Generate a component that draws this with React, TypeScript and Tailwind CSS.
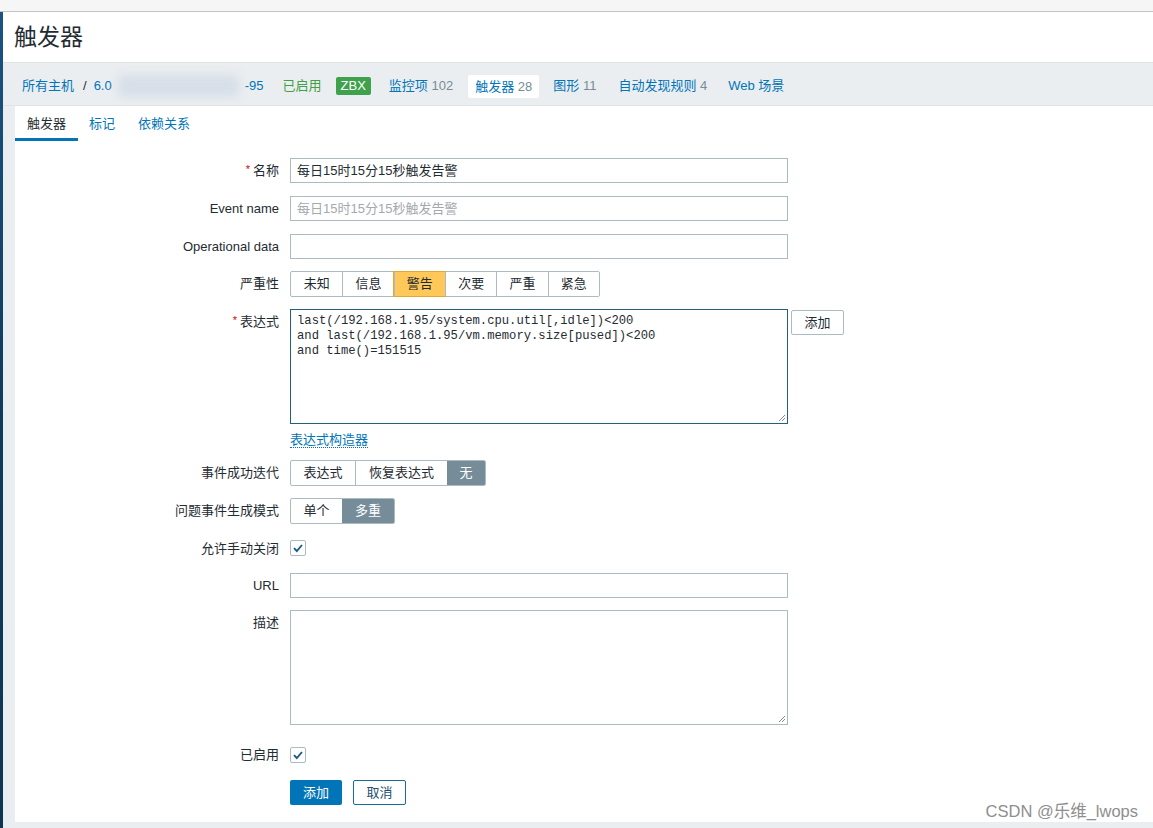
import React from "react";

const Check = () => (
  <div className="w-[16px] h-[16px] border border-[#acbbc2] rounded-[2px] bg-white flex items-center justify-center">
    <svg width="12" height="12" viewBox="0 0 12 12">
      <path d="M2 6.2 L4.8 9 L10 3" fill="none" stroke="#1d5a85" strokeWidth="1.9" />
    </svg>
  </div>
);

const Grip = () => (
  <svg width="8" height="8" viewBox="0 0 8 8" className="absolute right-[1px] bottom-[1px]">
    <path d="M7 1 L1 7 M7 4 L4 7" stroke="#8a8a8a" strokeWidth="1" />
  </svg>
);

function Row({ label, req, children, className = "" }: { label: string; req?: boolean; children: React.ReactNode; className?: string }) {
  return (
    <div className={"flex " + className}>
      <div className="w-[264px] text-right text-[13px] leading-[25px] text-[#1f2c33] shrink-0">
        {req && <span className="text-[#d40000] text-[11px] mr-[3px] relative top-[-2px]">*</span>}
        {label}
      </div>
      <div className="ml-[11px]">{children}</div>
    </div>
  );
}

const Input = ({ value, placeholder }: { value?: string; placeholder?: boolean }) => (
  <div
    className={
      "w-[498px] h-[25px] border border-[#acbbc2] bg-white px-[6px] text-[13px] leading-[23px] " +
      (placeholder ? "text-[#a3a9ad]" : "text-[#1f2c33]")
    }
  >
    {value}
  </div>
);

export default function App() {
  const sev = ["未知", "信息", "警告", "次要", "严重", "紧急"];
  return (
    <div className="w-[1153px] h-[828px] overflow-hidden bg-[#ebeef0] relative font-['Liberation_Sans','Noto_Sans_CJK_SC',sans-serif]">
      {/* top strip */}
      <div className="h-[12px] bg-[#f6f6f6] border-b border-[#c3c3c3]" />
      <div className="flex h-[816px]">
        <div className="w-[3px] bg-gradient-to-b from-[#1b5384] via-[#103a5c] to-[#0f3553] shrink-0" />
        <div className="flex-1 flex flex-col min-w-0">
          {/* header */}
          <div className="h-[51px] bg-white flex items-center pl-[11px] border-b border-[#dfe4e7]">
            <span className="text-[23px] text-[#1f2c33] leading-none">触发器</span>
          </div>
          {/* breadcrumb */}
          <div className="h-[43px] bg-[#ebeef0] border-b border-[#dfe4e7] flex items-center text-[13px] pl-[19px] pt-[4px]">
            <span className="text-[#0275b8]">所有主机</span>
            <span className="text-[#1f2c33] ml-[9px]">/</span>
            <span className="text-[#0275b8] ml-[7px]">6.0</span>
            <span className="inline-block w-[121px] h-[22px] mx-[6px] bg-[#d6dfe8] blur-[5px] rounded" />
            <span className="text-[#0275b8]">-95</span>
            <span className="text-[#429e47] ml-[19px]">已启用</span>
            <span className="ml-[14px] bg-[#3fa14b] text-white px-[5px] h-[18px] leading-[18px] rounded-[2px] text-[13px]">ZBX</span>
            <span className="ml-[11px] px-[7px] text-[#0275b8]">
              监控项 <span className="text-[#768d99]">102</span>
            </span>
            <span className="ml-[8px] px-[7px] h-[23px] leading-[23px] bg-white rounded-[2px] text-[#0275b8]">
              触发器 <span className="text-[#768d99]">28</span>
            </span>
            <span className="ml-[7px] px-[7px] text-[#0275b8]">
              图形 <span className="text-[#768d99]">11</span>
            </span>
            <span className="ml-[8px] px-[7px] text-[#0275b8]">
              自动发现规则 <span className="text-[#768d99]">4</span>
            </span>
            <span className="ml-[7px] px-[7px] text-[#0275b8]">Web 场景</span>
          </div>
          {/* content */}
          <div className="flex-1 pl-[12px] flex flex-col">
            <div className="flex-1 bg-white">
              {/* tabs */}
              <div className="h-[35px] flex text-[13px]">
                <div className="px-[12px] flex items-center text-[#1f2c33] border-b-[3px] border-[#0275b8] pt-[3px]">触发器</div>
                <div className="px-[11px] flex items-center text-[#0275b8] pt-[3px] border-b-[3px] border-transparent">标记</div>
                <div className="px-[12px] flex items-center text-[#0275b8] pt-[3px] border-b-[3px] border-transparent">依赖关系</div>
              </div>
              {/* form */}
              <div className="pt-[17px] flex flex-col gap-[12px]">
                <Row label="名称" req>
                  <Input value="每日15时15分15秒触发告警" />
                </Row>
                <Row label="Event name">
                  <Input value="每日15时15分15秒触发告警" placeholder />
                </Row>
                <Row label="Operational data" className="mt-[1px]">
                  <Input />
                </Row>
                <Row label="严重性">
                  <div className="w-[310px] h-[26px] grid grid-cols-6 border border-[#acbbc2] rounded-[2px] text-[13px] text-[#1f2c33]">
                    {sev.map((s, i) => (
                      <div
                        key={s}
                        className={
                          "flex items-center justify-center " +
                          (i > 0 ? "border-l border-[#acbbc2] " : "") +
                          (i === 2 ? "bg-[#ffc859] outline outline-1 outline-[#e0a83a]" : "")
                        }
                      >
                        {s}
                      </div>
                    ))}
                  </div>
                </Row>
                <Row label="表达式" req>
                  <div className="flex items-start">
                    <div className="relative w-[498px] h-[115px] border border-[#245f7c] bg-white px-[6px] py-[4px] font-['Liberation_Mono',monospace] text-[12.2px] leading-[15px] text-[#1f2c33] whitespace-pre">
                      {"last(/192.168.1.95/system.cpu.util[,idle])<200\nand last(/192.168.1.95/vm.memory.size[pused])<200\nand time()=151515"}
                      <Grip />
                    </div>
                    <div className="ml-[3px] mt-[1px] w-[53px] h-[25px] border border-[#acbbc2] rounded-[2px] text-[13px] text-[#1f2c33] flex items-center justify-center">
                      添加
                    </div>
                  </div>
                  <div className="mt-[7px] leading-[17px] text-[13px]">
                    <span className="text-[#0275b8] border-b border-dotted border-[#0275b8]">表达式构造器</span>
                  </div>
                </Row>
                <Row label="事件成功迭代">
                  <div className="flex h-[26px] border border-[#acbbc2] rounded-[2px] text-[13px] text-[#1f2c33] w-fit overflow-hidden">
                    <div className="w-[64px] flex items-center justify-center">表达式</div>
                    <div className="w-[92px] flex items-center justify-center border-l border-[#acbbc2]">恢复表达式</div>
                    <div className="w-[38px] flex items-center justify-center bg-[#768d99] text-white">无</div>
                  </div>
                </Row>
                <Row label="问题事件生成模式">
                  <div className="flex h-[26px] border border-[#acbbc2] rounded-[2px] text-[13px] text-[#1f2c33] w-fit overflow-hidden">
                    <div className="w-[51px] flex items-center justify-center">单个</div>
                    <div className="w-[52px] flex items-center justify-center bg-[#768d99] text-white">多重</div>
                  </div>
                </Row>
                <Row label="允许手动关闭">
                  <div className="h-[25px] flex items-center pb-[1px]">
                    <Check />
                  </div>
                </Row>
                <Row label="URL">
                  <Input />
                </Row>
                <Row label="描述">
                  <div className="relative w-[498px] h-[115px] border border-[#acbbc2] bg-white">
                    <Grip />
                  </div>
                </Row>
                <Row label="已启用" className="mt-[5px]">
                  <div className="h-[25px] flex items-center">
                    <Check />
                  </div>
                </Row>
                <Row label="" className="mt-[1px]">
                  <div className="flex gap-[11px] text-[13px]">
                    <div className="w-[52px] h-[25px] bg-[#0275b8] text-white rounded-[2px] flex items-center justify-center">添加</div>
                    <div className="w-[53px] h-[25px] border border-[#1b6a98] text-[#1d4f6e] rounded-[2px] flex items-center justify-center">取消</div>
                  </div>
                </Row>
              </div>
            </div>
            <div className="h-[6px]" />
          </div>
        </div>
      </div>
      <div className="absolute right-[15px] bottom-[9px] text-[16.5px] text-[#8e8e8e] leading-none">CSDN @乐维_lwops</div>
    </div>
  );
}
